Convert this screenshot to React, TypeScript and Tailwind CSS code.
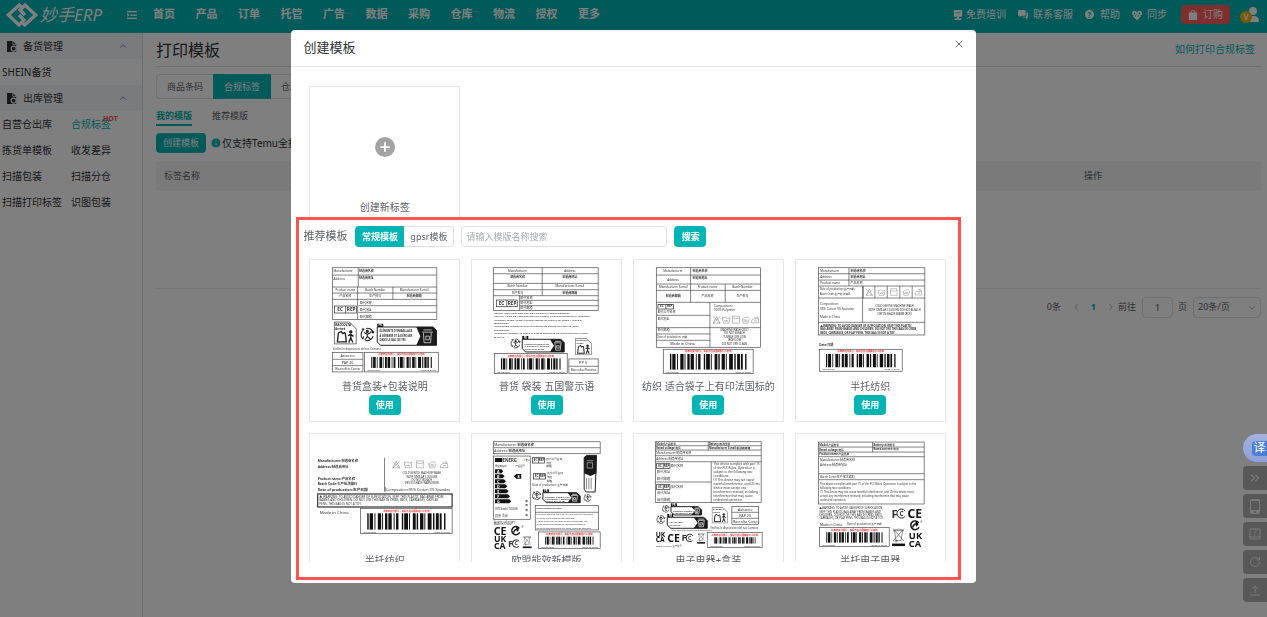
import React, { ReactNode } from 'react'
import { ChevronDown, ChevronLeft, ChevronRight, ChevronUp, ChevronsRight, Info, Plus, RotateCw, X } from 'lucide-react'

interface TextProps {
  x: number;
  y: number;
  s?: number;
  bold?: boolean;
  mid?: boolean;
  fill?: string;
  children: ReactNode;
}

interface BoxProps {
  x: number;
  y: number;
  w: number;
  h: number;
}

interface Template {
  name: string;
  art: ReactNode;
}

const navItems = ['首页', '产品', '订单', '托管', '广告', '数据', '采购', '仓库', '物流', '授权', '更多']

const outboundItems = ['自营仓出库', '合规标签', '拣货单模板', '收发差异', '扫描包装', '扫描分仓', '扫描打印标签', '识图包装']

const barWidths = [3, 2, 7, 3, 2, 5, 7, 2, 2, 4, 5, 2, 7, 4, 2, 3, 5, 7, 3, 2, 8, 2, 2, 6, 6, 2, 3, 4, 7, 2, 2, 5, 8, 3, 3, 3, 6, 2, 4, 5, 3]

/* ---------- small pieces used by the label previews ---------- */

const T = ({ x, y, s = 9, bold, mid, fill = '#333', children }: TextProps) => (
  <text x={x} y={y} fontSize={s} fontWeight={bold ? 700 : 400} textAnchor={mid ? 'middle' : 'start'} fill={fill}>
    {children}
  </text>
)

const Box = ({ x, y, w, h }: BoxProps) => (
  <rect x={x} y={y} width={w} height={h} fill="none" stroke="#444" strokeWidth={2} />
)

const Lines = ({ d }: { d: string }) => <path d={d} fill="none" stroke="#444" strokeWidth={2} />

const Barcode = ({ x, y, w, h }: BoxProps) => {
  const total = barWidths.reduce((a, b) => a + b, 0)
  const inner = w - 40
  let pos = x + 20
  return (
    <g>
      <Box x={x} y={y} w={w} h={h} />
      <T x={x + w / 2} y={y + 9} s={7} mid bold fill="#f83030">此条码仅为展示，实际会自动替换客户上传的</T>
      {barWidths.map((bar, index) => {
        const width = (bar / total) * inner
        const left = pos
        pos += width
        return index % 2 === 0 ? (
          <rect key={index} x={left} y={y + 14} width={width} height={h - 26} fill="#111" />
        ) : null
      })}
      <T x={x + 6} y={y + h - 3} s={7}>1234567890</T>
      <T x={x + w - 54} y={y + h - 3} s={7}>Made in China</T>
    </g>
  )
}

const EcRep = ({ x, y, w, h }: BoxProps) => (
  <g>
    <rect x={x} y={y} width={w} height={h} fill="none" stroke="#222" strokeWidth={2} />
    <path d={`M${x + w / 2} ${y}v${h}`} stroke="#222" strokeWidth={2} />
    <T x={x + w / 4} y={y + h - 5} s={h > 18 ? 14 : 9} bold mid>EC</T>
    <T x={x + (w * 3) / 4} y={y + h - 5} s={h > 18 ? 14 : 9} bold mid>REP</T>
  </g>
)

const Triman = ({ x, y, size }: { x: number; y: number; size: number }) => (
  <svg x={x} y={y} width={size} height={size} viewBox="0 0 40 40" fill="none" stroke="#222" strokeWidth={3}>
    <path d="M13 5C3 11 1 24 9 32M13 5l-7 0M9 32l2-7" />
    <path d="M18 3c10-2 18 4 19 13M37 16l-7-5M37 16l3-6" />
    <path d="M37 24c-3 9-12 14-21 12" />
    <circle cx="21" cy="11" r="3" fill="#222" />
    <path d="M12 14l9 5 10-5M21 18v8l-7 8M21 25l9 7" />
  </svg>
)

const SortBanner = ({ x, y, w, h, lines }: BoxProps & { lines: string[] }) => (
  <g>
    <rect x={x} y={y - 10} width={18} height={10} fill="#111" />
    <T x={x + 9} y={y - 2} s={8} bold mid fill="#fff">FR</T>
    <path d={`M${x} ${y}h${w - 10}l10 10v${h - 10}h${10 - w}l-10-10z`} fill="#fff" stroke="#222" strokeWidth={3} />
    <path d={`M${x + w * 0.66} ${y}h${w * 0.34 - 10}l10 10v${h - 10}h${-w * 0.34}l12-${h / 2}z`} fill="#1a1a1a" />
    {lines.map((line, index) => (
      <T key={line} x={x + 7} y={y + 16 + (index * (h - 14)) / lines.length} s={h > 40 ? 8 : 6} bold>{line}</T>
    ))}
    <g fill="none" stroke="#fff" strokeWidth={2}>
      <path d={`M${x + w * 0.78} ${y + h * 0.16}h${w * 0.14}M${x + w * 0.76} ${y + h * 0.28}h${w * 0.18}`} />
      <path d={`M${x + w * 0.78} ${y + h * 0.32}l2 ${h * 0.54}h${w * 0.11}l2-${h * 0.54}M${x + w * 0.82} ${y + h * 0.5}h${w * 0.06}v${h * 0.2}h${-w * 0.06}z`} />
    </g>
  </g>
)

const frLines = ["ÉLÉMENTS D'EMBALLAGE", 'À SÉPARER ET À DÉPOSER', 'DANS LE BAC DE TRI']

const Raccolta = ({ x, y, size }: { x: number; y: number; size: number }) => (
  <svg x={x} y={y} width={size} height={size} viewBox="0 0 68 68" fill="none" stroke="#222" strokeWidth={2}>
    <path d="M2 2h44l20 20v44H2z" />
    <text x="5" y="13" fontSize="9" fontWeight="700" fill="#222" stroke="none">RACCOLTA</text>
    <text x="5" y="24" fontSize="8" fontWeight="700" fill="#222" stroke="none">Arriveé</text>
    <path d="M14 34l-3 26h26l-3-26M14 34l8-4 5 6 7-4" strokeWidth="4" />
    <circle cx="50" cy="31" r="4" fill="#222" />
    <path d="M50 37v11l-6 14M50 48l6 14M42 42l8-4 8 6" strokeWidth="4" />
  </svg>
)

const Weee = ({ x, y, size }: { x: number; y: number; size: number }) => (
  <svg x={x} y={y} width={size * 0.7} height={size} viewBox="0 0 28 40" fill="none" stroke="#222" strokeWidth={1}>
    <path d="M6 9l3 19h10l3-19M4 8c6-4 14-4 20 0zM3 4l22 25M25 4L3 29" />
    <circle cx="9" cy="29" r="2" />
    <rect x="1" y="34" width="26" height="5" fill="#111" stroke="none" />
  </svg>
)

const GreenDot = ({ x, y, size }: { x: number; y: number; size: number }) => (
  <svg x={x} y={y} width={size} height={size} viewBox="0 0 40 40" fill="none" stroke="#111" strokeWidth={5}>
    <path d="M33 11A15 15 0 1 0 34 26" />
    <path d="M12 27c2-10 9-14 18-13M30 14l-8-6M30 14l-6 8" />
  </svg>
)

/* tub, triangle, square, iron ... one after another */
const CareIcons = ({ x, y, size, gap }: { x: number; y: number; size: number; gap: number }) => (
  <g fill="none" stroke="#555" strokeWidth={1}>
    {[
      'M2 20L11 3l9 17zM2 3l18 18M20 3L2 21',
      'M1 5l3 15h14l3-15M1 5c4 4 6-2 10 1s6 2 10-1M6 12l3 4 2-4 2 4 3-4',
      'M2 2h18v18H2zM2 6c6 4 12 4 18 0',
      'M2 8l3 12h12l4-12M3 12c4-7 9-8 17-7M7 12h9M6 15h10',
      'M1 19h20l-2-10H8c-4 0-6 4-7 10zM9 5h9v4M8 14h8',
    ].map((d, index) => (
      <svg key={index} x={x + index * gap} y={y} width={size} height={size} viewBox="0 0 22 22">
        <path d={d} />
      </svg>
    ))}
  </g>
)

const CeMark = ({ x, y, s }: { x: number; y: number; s: number }) => <T x={x} y={y} s={s} bold fill="#111">CE</T>

const Ukca = ({ x, y, s }: { x: number; y: number; s: number }) => (
  <g>
    <T x={x} y={y} s={s} bold fill="#111">UK</T>
    <T x={x} y={y + s * 0.8} s={s} bold fill="#111">CA</T>
  </g>
)

const Fcc = ({ x, y, s }: { x: number; y: number; s: number }) => (
  <g>
    <T x={x} y={y} s={s} bold>F</T>
    <circle cx={x + s * 0.88} cy={y - s * 0.36} r={s * 0.4} fill="none" stroke="#222" strokeWidth={3} pathLength={100} strokeDasharray="76 24" strokeDashoffset="-12" />
    <T x={x + s * 0.7} y={y - s * 0.16} s={s * 0.55} bold>C</T>
  </g>
)

/* ---------- label previews ---------- */

const BoxLabel = () => (
  <>
    <Box x={83} y={37} w={313} h={155} />
    <Lines d="M83 59h313M83 95h313M83 113h313M83 132h313M160 37v58M158 95v97M264 95v37M160 151h236M160 171h236" />
    <T x={86} y={51}>Manufacturer</T>
    <T x={162} y={51} bold>制造商名称</T>
    <T x={86} y={73}>Address</T>
    <T x={162} y={71} bold>制造商地址</T>
    <T x={121} y={107} mid>Product name</T>
    <T x={211} y={107} mid>Batch Number</T>
    <T x={328} y={107} mid>Manufacturer E-mail</T>
    <T x={121} y={126} mid>产品名称</T>
    <T x={211} y={126} mid>生产批号</T>
    <T x={328} y={126} mid bold>制造商邮箱</T>
    <EcRep x={89} y={152} w={66} h={21} />
    <T x={165} y={147}>欧代名称</T>
    <T x={165} y={167}>欧代地址</T>
    <T x={165} y={187}>欧代邮箱</T>
    <Raccolta x={86} y={198} size={70} />
    <Triman x={164} y={216} size={44} />
    <SortBanner x={217} y={215} w={178} h={55} lines={frLines} />
    <T x={83} y={284} s={8}>Verifica le disposizioni del tuo Comune</T>
    <Box x={83} y={292} w={91} h={58} />
    <Lines d="M83 312h91M83 331h91" />
    <T x={128} y={306} s={11} mid>Astuccio</T>
    <T x={128} y={325} s={11} mid>PAP 20</T>
    <T x={128} y={344} s={11} mid>Raccolta Carta</T>
    <Barcode x={179} y={291} w={222} h={59} />
  </>
)

const BagLabel = () => (
  <>
    <Box x={79} y={37} w={315} h={128} />
    <Lines d="M79 55h315M79 84h315M79 103h315M79 121h315M226 37v84M158 121v44M158 135h236M158 151h236" />
    <T x={152} y={49} mid>Manufacturer</T>
    <T x={309} y={49} mid>Address</T>
    <T x={152} y={68} mid bold>制造商名称</T>
    <T x={309} y={68} mid bold>制造商地址</T>
    <T x={152} y={96} mid>Batch Number</T>
    <T x={309} y={96} mid>Manufacturer E-mail</T>
    <T x={152} y={115} mid>生产批号</T>
    <T x={309} y={115} mid bold>制造商邮箱</T>
    <EcRep x={88} y={134} w={63} h={20} />
    <T x={161} y={131}>欧代名称</T>
    <T x={161} y={147}>欧代地址</T>
    <T x={161} y={162}>欧代邮箱</T>
    <T x={80} y={175} s={7} fill="#111">Warning: Keep plastic bags away from children to prevent suffocation.</T>
    <T x={80} y={186} s={7} fill="#111">Warnung: Halten Sie Plastiktüten fern von Kindern, um Erstickungsgefahr zu vermeiden.</T>
    <T x={80} y={196} s={7} fill="#111">Avvertenza: Tenere i sacchi di plastica lontano dai bambini per evitare il rischio di</T>
    <T x={80} y={206} s={7} fill="#111">soffocamento.</T>
    <T x={80} y={216} s={7} fill="#111">Avertissement: Éloignez les sacs en plastique des enfants pour éviter le risque</T>
    <T x={80} y={226} s={7} fill="#111">d'étouffement.</T>
    <T x={80} y={236} s={7} fill="#111">Advertencia: Mantener las bolsas de plástico alejadas de los niños para evitar el riesgo</T>
    <T x={80} y={247} s={7} fill="#111">de asfixia.</T>
    <Triman x={129} y={249} size={32} />
    <SortBanner x={166} y={252} w={126} h={38} lines={frLines} />
    <Raccolta x={324} y={248} size={52} />
    <Barcode x={82} y={295} w={219} h={60} />
    <Box x={306} y={311} w={88} h={43} />
    <Lines d="M306 333h88" />
    <T x={349} y={327} s={12} mid>PP 5</T>
    <T x={350} y={347} s={10} mid>Raccolta Plastica</T>
  </>
)

const TextileFrLabel = () => (
  <>
    <Box x={82} y={37} w={313} h={239} />
    <Lines d="M82 59h313M82 86h313M82 105h313M82 141h313M185 37v104M289 86v55M243 141v135M82 180h161M82 217h313M82 236h161M82 255h161" />
    <T x={132} y={51} mid>Manufacturer</T>
    <T x={191} y={51} bold>制造商名称</T>
    <T x={132} y={76} mid>Address</T>
    <T x={191} y={71} bold>制造商地址</T>
    <T x={133} y={99} mid>Manufacturer E-mail</T>
    <T x={236} y={99} mid>Product name</T>
    <T x={341} y={99} mid>Batch Number</T>
    <T x={133} y={126} mid bold>制造商邮箱</T>
    <T x={236} y={126} mid>产品名称</T>
    <T x={341} y={126} mid>生产批号</T>
    <EcRep x={87} y={147} w={47} h={14} />
    <T x={86} y={173}>欧代公司名称</T>
    <T x={86} y={193}>欧代地址</T>
    <T x={86} y={228}>欧代邮箱</T>
    <T x={84} y={248} s={8}>Date of production: 日期</T>
    <T x={161} y={269} s={11} mid>Made in China</T>
    <T x={255} y={154}>Composition:</T>
    <T x={255} y={166}>100% Polyester</T>
    <CareIcons x={250} y={180} size={26} gap={29} />
    <T x={317} y={226} s={8} mid>MACHINE WASH COLD</T>
    <T x={317} y={236} s={8} mid>DO NOT BLEACH</T>
    <T x={317} y={247} s={8} mid>TUMBLE DRY LOW</T>
    <T x={317} y={258} s={8} mid>IRON LOW</T>
    <T x={317} y={270} s={8} mid>DO NOT DRY CLEAN</T>
    <Barcode x={103} y={282} w={270} h={73} />
  </>
)

const SemiTextileLabel = () => (
  <>
    <Box x={83} y={37} w={319} h={202} />
    <Lines d="M83 55h319M83 74h319M83 92h319M83 128h319M83 201h319M174 37v55M215 92v109M217 92v36M252 92v36M289 92v36M327 92v36M364 92v36" />
    <T x={88} y={49}>Manufacturer</T>
    <T x={179} y={49} bold>制造商名称</T>
    <T x={88} y={68}>Address</T>
    <T x={179} y={68} bold>制造商地址</T>
    <T x={88} y={87}>Product name</T>
    <T x={179} y={87}>产品名称</T>
    <T x={86} y={103} s={8}>Date of production:生产日期</T>
    <T x={86} y={119} s={8}>Batch Code:生产批次编码</T>
    <CareIcons x={223} y={98} size={24} gap={37} />
    <T x={87} y={149}>Composition:</T>
    <T x={87} y={163}>95% Cotton 5% Spandex</T>
    <T x={87} y={187}>Made in China</T>
    <T x={311} y={154} s={8} mid>COLD GENTLE MACHINE WASH</T>
    <T x={311} y={166} s={8} mid>WITH SIMILAR COLOURS DO NOT BLEACH</T>
    <T x={311} y={178} s={8} mid>DRY IN SHADE WARM IRON</T>
    <T x={88} y={214} s={8} bold>▲WARNING: TO AVOID DANGER OF SUFFOCATION, KEEP THIS PLASTIC</T>
    <T x={88} y={225} s={8} bold>BAG AWAY FROM BABIES AND CHILDREN. DO NOT USE THIS BAG IN CRIBS,</T>
    <T x={88} y={235} s={8} bold>BEDS, CARRIAGES, OR PLAY PENS. THIS BAG IS NOT A TOY.</T>
    <T x={85} y={273} s={9} bold>Date:日期</T>
    <Barcode x={85} y={282} w={249} h={66} />
  </>
)

const SemiTextileWideLabel = () => (
  <>
    <T x={38} y={98} s={10} bold>Manufacturer:制造商名称</T>
    <T x={38} y={115} s={10} bold>Address:制造商地址</T>
    <T x={38} y={151} s={10} bold>Product name:产品名称</T>
    <T x={38} y={167} s={10} bold>Batch Code:生产批次编码</T>
    <T x={38} y={184} s={11} bold>Date of production:生产日期</T>
    <Lines d="M239 85v102M241 173v14" />
    <CareIcons x={261} y={92} size={26} gap={36} />
    <T x={351} y={134} s={8} mid>COLD GENTLE MACHINE WASH</T>
    <T x={351} y={145} s={8} mid>WITH SIMILAR COLOURS</T>
    <T x={351} y={155} s={8} mid>DO NOT BLEACH</T>
    <T x={351} y={165} s={8} mid>DRY IN SHADE WARM IRON</T>
    <T x={243} y={184} s={11}>Composition:95% Cotton 5% Spandex</T>
    <rect x={38} y={194} width={404} height={39} fill="none" stroke="#444" strokeWidth={4} />
    <T x={43} y={205} s={9}>▲ WARNING: TO AVOID DANGER OF SUFFOCATION, KEEP THIS PLASTIC BAG AWAY FROM</T>
    <T x={43} y={216} s={9}>BABIES AND CHILDREN. DO NOT USE THIS BAG IN CRIBS, BEDS, CARRIAGES, OR PLAY</T>
    <T x={43} y={227} s={9}>PENS. THIS BAG IS NOT A TOY.</T>
    <T x={44} y={253} s={13}>Made in China</T>
    <Barcode x={167} y={238} w={275} h={75} />
  </>
)

const EnergyLabel = () => (
  <>
    <Box x={79} y={37} w={321} h={36} />
    <Lines d="M79 55h321" />
    <T x={82} y={49} s={10}>Manufacturer: <tspan fontWeight={700}>制造商名称</tspan></T>
    <T x={82} y={68} s={10}>Address: <tspan fontWeight={700}>制造商地址</tspan></T>
    <Box x={79} y={80} w={111} h={190} />
    <rect x={84} y={86} width={22} height={12} fill="#111" />
    <T x={107} y={97} s={13} bold>ENERG</T>
    <T x={162} y={96} s={6}>⚡ 二维码</T>
    <T x={84} y={113} s={7}>供应商名称</T>
    <T x={146} y={113} s={7}>产品型号</T>
    {['A', 'B', 'C', 'D', 'E', 'F', 'G'].map((grade, index) => (
      <g key={grade}>
        <path d={`M84 ${120 + index * 15}h${19 + index * 4}l6 6-6 6h-${19 + index * 4}z`} fill="#111" />
        <T x={94} y={130 + index * 15} s={11} bold mid fill="#fff">{grade}</T>
      </g>
    ))}
    <path d="M141 141l7-7h15v14h-15z" fill="#111" />
    <T x={155} y={145} s={10} bold mid fill="#fff">B</T>
    <T x={84} y={243} s={10}>XYZkwh/1000h</T>
    <T x={84} y={262} s={9}>其他 法规</T>
    {[217, 231, 246, 260].map((y) => <T key={y} x={175} y={y} s={8}>高</T>)}
    <T x={80} y={280} s={8}>Country of origin:</T>
    <T x={80} y={288} s={8}>Made in China</T>
    <EcRep x={197} y={85} w={36} h={16} />
    <T x={238} y={92} s={8}>欧代公司名称</T>
    <T x={238} y={103} s={8}>地址</T>
    <T x={238} y={114} s={8}>邮箱</T>
    <EcRep x={200} y={133} w={36} h={16} />
    <T x={240} y={134} s={8}>英代公司名称</T>
    <T x={240} y={145} s={8}>地址</T>
    <T x={240} y={157} s={8}>邮箱</T>
    <T x={196} y={170} s={8}>Date of production: 生产日期</T>
    <path d="M352 84l8-6h29l-4 110h-27l-6-8z" fill="#fff" stroke="#222" strokeWidth={3} />
    <path d="M352 84l8-6h29v54l-18 8-19-8z" fill="#1a1a1a" />
    <path d="M359 94h20M361 100h16v16h-16zM359 146v34M366 146v34M373 146v34" fill="none" stroke="#888" strokeWidth={3} />
    <Triman x={349} y={194} size={25} />
    <Triman x={194} y={185} size={29} />
    <SortBanner x={228} y={190} w={112} h={30} lines={frLines} />
    <Box x={205} y={229} w={190} h={73} />
    <Lines d="M205 249h190" />
    <T x={208} y={239} s={7} bold>Input voltage/current</T>
    <T x={208} y={258} s={6}>This device complies with part 15 of the FCC Rules. Operation</T>
    <T x={208} y={268} s={6}>is subject to the following two conditions:</T>
    <T x={208} y={278} s={6}>(1) This device may not cause harmful interference, and</T>
    <T x={208} y={288} s={6}>(2) this device must accept any interference received,</T>
    <T x={208} y={298} s={6}>including interference that may cause undesired operation.</T>
    <CeMark x={80} y={317} s={32} />
    <GreenDot x={130} y={288} size={33} />
    <T x={163} y={297} s={8}>®</T>
    <Ukca x={81} y={337} s={26} />
    <Fcc x={123} y={353} s={28} />
    <Weee x={166} y={316} size={42} />
    <Barcode x={215} y={308} w={185} h={50} />
  </>
)

const ElectronicBoxLabel = () => (
  <>
    <Box x={79} y={37} w={318} h={183} />
    <Lines d="M79 49h318M79 62h318M79 79h318M79 97h318M238 37v25M247 97v123M79 158h168" />
    <T x={82} y={47} s={8} bold>Model:产品型号</T>
    <T x={240} y={47} s={8} bold>Battery:电池型号</T>
    <T x={82} y={59} s={8} bold>Rated voltage:电压</T>
    <T x={240} y={59} s={8} bold>Manufacturer E-mail:制造商邮箱</T>
    <T x={82} y={75} s={9}>Manufacturer:制造商名称</T>
    <T x={82} y={91} s={9}>Address:制造商地址</T>
    <EcRep x={83} y={103} w={40} h={14} />
    <T x={126} y={114} s={9}>欧代名称</T>
    <T x={84} y={132} s={10}>欧代地址</T>
    <T x={84} y={151} s={10}>欧代邮箱</T>
    <EcRep x={83} y={166} w={40} h={14} />
    <T x={126} y={176} s={9}>英代名称</T>
    <T x={84} y={195} s={10}>英代地址</T>
    <T x={84} y={214} s={10}>英代邮箱</T>
    {[
      'This device complies with part 15',
      'of the FCC Rules. Operation is',
      'subject to the following two',
      'conditions:',
      '(1) This device may not cause',
      'harmful interference, and (2) this',
      'device must accept any',
      'interference received, including',
      'interference that may cause',
      'undesired operation.',
    ].map((line, index) => <T key={line} x={254} y={107 + index * 12} s={9}>{line}</T>)}
    <Triman x={98} y={227} size={24} />
    <SortBanner x={126} y={232} w={92} h={25} lines={frLines.slice(0, 2)} />
    <Triman x={81} y={257} size={28} />
    <SortBanner x={115} y={264} w={120} h={33} lines={['CET APPAREIL', 'SE RECYCLE']} />
    <T x={128} y={305} s={5}>Points de collecte sur www.quefairedemesdechets.fr</T>
    <Raccolta x={248} y={233} size={50} />
    <Box x={309} y={232} w={80} h={53} />
    <Lines d="M309 249h80M309 267h80" />
    <T x={349} y={244} s={11} mid>Astuccio</T>
    <T x={349} y={262} s={11} mid>PAP 20</T>
    <T x={349} y={280} s={11} mid>Raccolta Carta</T>
    <T x={244} y={299} s={8}>Verifica le disposizioni del tuo Comune</T>
    <Ukca x={80} y={323} s={20} />
    <CeMark x={115} y={337} s={32} />
    <Fcc x={158} y={336} s={28} />
    <Weee x={204} y={308} size={36} />
    <T x={81} y={352} s={7}>Batch Number:生产批号</T>
    <Barcode x={235} y={310} w={165} h={45} />
  </>
)

const SemiElectronicLabel = () => (
  <>
    <Box x={83} y={38} w={317} h={186} />
    <Lines d="M83 53h317M83 68h317M83 82h317M83 133h317M83 151h317M245 38v30" />
    <T x={85} y={50} s={8} bold>Model:产品型号</T>
    <T x={248} y={49} s={8} bold>Battery:电池型号</T>
    <T x={85} y={64} s={8} bold>Rated voltage:电压</T>
    <T x={248} y={63} s={8} bold>Rated current: 电流</T>
    <T x={85} y={77} s={8} bold>Product name:产品名称</T>
    <T x={87} y={95} s={9}>Manufacturer:制造商名称</T>
    <T x={87} y={109} s={9}>Address:制造商地址</T>
    <T x={87} y={145} s={9}>Batch Code:生产批次编码</T>
    {[
      'This device complies with part 15 of the FCC Rules. Operation is subject to the',
      'following two conditions:',
      '(1) This device may not cause harmful interference, and (2) this device must',
      'accept any interference received, including interference that may cause',
      'undesired operation.',
    ].map((line, index) => <T key={line} x={87} y={167 + index * 12} s={8}>{line}</T>)}
    <T x={85} y={240} s={8}>▲WARNING: TO AVOID DANGER OF SUFFOCATION,</T>
    <T x={85} y={250} s={8}>KEEP THIS PLASTIC BAG AWAY FROM BABIES AND</T>
    <T x={85} y={260} s={8}>CHILDREN. DO NOT USE THIS BAG IN CRIBS, BEDS,</T>
    <T x={85} y={270} s={8}>CARRIAGES, OR PLAY PENS. THIS BAG IS NOT A TOY.</T>
    <T x={87} y={289} s={10}>Made in China</T>
    <T x={168} y={288} s={8}>Date of production:生产日期</T>
    <Barcode x={86} y={295} w={209} h={57} />
    <Fcc x={302} y={265} s={34} />
    <CeMark x={350} y={265} s={36} />
    <GreenDot x={355} y={271} size={35} />
    <T x={388} y={280} s={8}>®</T>
    <Weee x={302} y={292} size={60} />
    <Ukca x={354} y={330} s={28} />
  </>
)

const templates: Template[] = [
  { name: '普货盒装+包装说明', art: <BoxLabel /> },
  { name: '普货 袋装 五国警示语', art: <BagLabel /> },
  { name: '纺织 适合袋子上有印法国标的', art: <TextileFrLabel /> },
  { name: '半托纺织', art: <SemiTextileLabel /> },
  { name: '半托纺织', art: <SemiTextileWideLabel /> },
  { name: '欧盟能效新模版', art: <EnergyLabel /> },
  { name: '电子电器+盒装', art: <ElectronicBoxLabel /> },
  { name: '半托电子电器', art: <SemiElectronicLabel /> },
]

/* ---------- page ---------- */

const Header = () => (
  <header className="flex h-[33px] items-center bg-[#00b4b3] pr-[7px] pb-1 pl-1.5 text-white">
    <svg viewBox="0 0 96 72" className="h-6 w-8 shrink-0" fill="none" stroke="currentColor" strokeWidth="10">
      <path d="M48 14L40 6 7 36l32 30 15-15-15-15" />
      <path d="M48 58l8 8 33-30L57 6 42 21l15 15" />
    </svg>
    <span className="ml-0.5 w-[87px] text-[17px] leading-6 italic">妙手ERP</span>
    <button type="button" aria-label="菜单" className="mr-4">
      <svg viewBox="0 0 12 12" className="h-2.5 w-2.5" fill="none" stroke="currentColor" strokeWidth="1.5">
        <path d="M0 2h12M4 6h8M0 10h12M0 4.500l2 1.500-2 1.500" />
      </svg>
    </button>
    <nav className="flex w-[447px] justify-between text-[11px] font-bold">
      {navItems.map((item) => <a key={item} href="#">{item}</a>)}
    </nav>
    <div className="ml-auto flex items-center text-[10px]">
      <a href="#" className="mr-3 flex items-center gap-[3px]">
        <svg viewBox="0 0 12 12" className="h-2.5 w-2.5" fill="currentColor">
          <path d="M1 0h10v8H7v2h3v2H2v-2h3V8H1zM3 3v1h6V3z" fillRule="evenodd" />
        </svg>
        免费培训
      </a>
      <a href="#" className="mr-3 flex items-center gap-[5px]">
        <svg viewBox="0 0 12 12" className="h-2.5 w-2.5" fill="currentColor">
          <path d="M1 0h8v7H4L2 9V7H0V1zM10 3h2v6h-1v3L9 9H5V8h5z" />
        </svg>
        联系客服
      </a>
      <a href="#" className="mr-3 flex items-center gap-1.5">
        <span className="flex h-[9px] w-[9px] items-center justify-center rounded-full bg-white text-[8px] font-bold text-[#00b4b3]">?</span>
        帮助
      </a>
      <a href="#" className="mr-3.5 flex items-center gap-[5px]">
        <svg viewBox="0 0 12 12" className="h-2.5 w-2.5" fill="none" stroke="currentColor" strokeWidth="2">
          <circle cx="3" cy="4" r="2" />
          <circle cx="9" cy="4" r="2" />
          <path d="M2 7l4 4 4-4M6 6v3" />
        </svg>
        同步
      </a>
      <button type="button" className="flex h-[19px] items-center gap-[5px] rounded-sm bg-[#ff5c5c] px-[7px]">
        <svg viewBox="0 0 12 12" className="h-2.5 w-2.5" fill="currentColor">
          <path d="M3 3a3 3 0 0 1 6 0h2v9H1V3zm1 0h4a2 2 0 0 0-4 0z" fillRule="evenodd" />
        </svg>
        订购
      </button>
      <button type="button" aria-label="账号" className="ml-2.5">
        <svg viewBox="0 0 20 16" className="h-4 w-5">
          <circle cx="13" cy="4" r="4" fill="#fff" />
          <path d="M7 15c0-5 2-6 6-6s6 1 6 6z" fill="#fff" />
          <circle cx="6" cy="10" r="6" fill="#f0b400" />
          <text x="6" y="13" fontSize="8" fontWeight="700" textAnchor="middle" fill="#fff">V</text>
        </svg>
      </button>
    </div>
  </header>
)

const GroupTitle = ({ title }: { title: string }) => (
  <button type="button" className="flex h-[26px] w-full items-center bg-[#f5f7fa] pr-3.5 pl-[7px] text-left">
    <svg viewBox="0 0 12 13" className="mr-1.5 h-[11px] w-2.5">
      <path d="M0 0h7l4 4v9H0z" fill="#303133" />
      <path d="M7 0v4h4" fill="none" stroke="#f5f7fa" />
      <circle cx="8" cy="9" r="3" fill="#303133" stroke="#f5f7fa" strokeWidth="1.500" />
    </svg>
    {title}
    <ChevronUp className="ml-auto h-2.5 w-2.5 text-gray-500" />
  </button>
)

const Sidebar = () => (
  <aside className="w-[143px] shrink-0 border-r border-[#dcdfe6] text-[10px] text-[#303133]">
    <GroupTitle title="备货管理" />
    <a href="#" className="flex h-[26px] items-center pl-0.5">SHEIN备货</a>
    <GroupTitle title="出库管理" />
    <div className="grid grid-cols-2 pr-0.5 pl-0.5">
      {outboundItems.map((item) => (
        <a key={item} href="#" className={`flex h-[26px] items-center whitespace-nowrap ${item === '合规标签' ? 'text-[#00b4b3]' : ''}`}>
          <span className="relative">
            {item}
            {item === '合规标签' && <sup className="absolute top-0.5 left-8 text-[7px] font-bold text-[#ff4d4f]">HOT</sup>}
          </span>
        </a>
      ))}
    </div>
  </aside>
)

const Pagination = () => (
  <div className="mt-2 flex items-center justify-end text-[9px] text-[#606266]">
    <span className="mr-2.5">0条</span>
    <button type="button" aria-label="上一页"><ChevronLeft className="h-2.5 w-2.5 text-gray-400" /></button>
    <span className="mx-2.5 font-bold text-[#00b4b3]">1</span>
    <button type="button" aria-label="下一页"><ChevronRight className="h-2.5 w-2.5 text-gray-400" /></button>
    <label htmlFor="page" className="ml-0.5">前往</label>
    <input id="page" defaultValue="1" className="mr-[5px] ml-1.5 h-[21px] w-[31px] rounded-sm border border-[#dcdfe6] text-center" />
    <span>页</span>
    <div className="relative ml-1.5">
      <select aria-label="每页条数" className="h-[21px] w-[68px] appearance-none rounded-sm border border-[#dcdfe6] pl-1">
        <option>20条/页</option>
      </select>
      <ChevronDown className="pointer-events-none absolute top-1.5 right-1 h-2.5 w-2.5 text-gray-400" />
    </div>
  </div>
)

const MainContent = () => (
  <main className="min-w-0 flex-1 pr-1.5 pl-[13px] text-[9px] text-[#606266]">
    <div className="flex h-[34px] items-center justify-between border-b border-[#dcdfe6]">
      <h1 className="text-[16px] text-[#303133]">打印模板</h1>
      <a href="#" className="mr-1.5 text-[10px] text-[#00b4b3]">如何打印合规标签</a>
    </div>
    <div className="mt-[7px] inline-flex h-[25px] rounded-sm border border-[#dcdfe6]">
      <button type="button" className="w-14">商品条码</button>
      <button type="button" className="-my-px w-[58px] bg-[#00b4b3] text-white">合规标签</button>
      <button type="button" className="w-14">仓库条码</button>
    </div>
    <div className="mt-2 flex h-[19px] items-stretch gap-5">
      <button type="button" className="border-b-2 border-[#00b4b3] font-bold text-[#00b4b3]">我的模版</button>
      <button type="button" className="border-b-2 border-transparent">推荐模版</button>
    </div>
    <div className="mt-[7px] flex items-center">
      <button type="button" className="h-5 rounded-sm bg-[#00b4b3] px-[7px] text-white">创建模板</button>
      <Info className="ml-1 h-3 w-3 fill-[#00b4b3] text-white" />
      <span className="text-[10px] text-[#303133]">仅支持Temu全托管、半托管店铺使用</span>
    </div>
    <table className="mt-2 w-full table-fixed text-left">
      <thead>
        <tr className="h-[30px] bg-[#f5f5f5]">
          <th className="pl-2 font-normal">标签名称</th>
          <th className="w-[185px] pl-2 font-normal">操作</th>
        </tr>
      </thead>
      <tbody>
        <tr className="h-[97px] border-b border-[#ebeef5]">
          <td colSpan={2}></td>
        </tr>
      </tbody>
    </table>
    <Pagination />
  </main>
)

const toolClass = 'flex h-6 w-6 items-center justify-center rounded-l-sm bg-[#b0b0b0] text-[#f2f2f2]'

const FloatTools = () => (
  <div className="fixed right-0 bottom-[15px] flex flex-col gap-1">
    <button type="button" aria-label="收起" className={toolClass}><ChevronsRight className="h-3.5 w-3.5" /></button>
    <button type="button" aria-label="手机端" className={toolClass}>
      <svg viewBox="0 0 10 15" className="h-[15px] w-2.5">
        <rect width="10" height="15" rx="2" fill="currentColor" />
        <rect x="1" y="2" width="8" height="9" fill="#b0b0b0" />
        <circle cx="5" cy="13" r="1" fill="#b0b0b0" />
      </svg>
    </button>
    <button type="button" aria-label="帮助手册" className={toolClass}>
      <svg viewBox="0 0 12 12" className="h-3 w-3" fill="none" stroke="currentColor">
        <path d="M1 1h10v10H1zM1 9h10" />
        <text x="6" y="8" fontSize="8" textAnchor="middle" fill="currentColor" stroke="none">?</text>
      </svg>
    </button>
    <button type="button" aria-label="刷新" className={toolClass}><RotateCw className="h-3 w-3" /></button>
    <button type="button" aria-label="回到顶部" className={toolClass}>
      <svg viewBox="0 0 12 12" className="h-3 w-3" fill="none" stroke="currentColor">
        <path d="M6 9V2M3 5l3-3 3 3M1 11h10" />
      </svg>
    </button>
  </div>
)

const CreateModal = () => (
  <div className="fixed inset-0 flex justify-center bg-black/50 pt-[30px] pb-[34px]">
    <div role="dialog" aria-label="创建模板" className="relative flex w-[54%] flex-col rounded-sm bg-white pb-[21px] text-[#606266]">
      <div className="flex h-[37px] shrink-0 items-center justify-between border-b border-[#e8eaf0] pr-[11px] pl-3">
        <h2 className="text-[13px] text-[#303133]">创建模板</h2>
        <button type="button" aria-label="关闭" className="mb-2"><X className="h-3 w-3" /></button>
      </div>

      <div className="h-[150px] shrink-0 overflow-hidden pt-[19px] pr-[30px] pl-[18px]">
        <div className="grid grid-cols-4 gap-[11px]">
          <button type="button" className="flex h-[163px] flex-col items-center border border-[#e4e7ed] pt-[50px] text-[10px]">
            <span className="flex h-5 w-5 items-center justify-center rounded-full bg-[#a3a3a3] text-white">
              <Plus className="h-3.5 w-3.5" strokeWidth={3} />
            </span>
            <span className="mt-[43px]">创建新标签</span>
          </button>
        </div>
      </div>

      <div className="flex h-[42px] shrink-0 items-center pb-[3px] pl-3 text-[9px]">
        <span className="mr-2 text-[11px]">推荐模板</span>
        <button type="button" className="h-[21px] w-[49px] rounded-l-sm bg-[#00b4b3] font-bold text-white">常规模板</button>
        <button type="button" className="h-[21px] w-[50px] rounded-r-sm border border-l-0 border-[#dcdfe6]">gpsr模板</button>
        <input
          type="text"
          aria-label="模版名称"
          placeholder="请输入模版名称搜索"
          className="mx-[7px] h-[21px] w-[206px] rounded-sm border border-[#dcdfe6] px-1 placeholder:text-[#a8abb2]"
        />
        <button type="button" className="h-[21px] w-8 rounded-sm bg-[#00b4b3] font-bold text-white">搜索</button>
      </div>

      <div className="min-h-0 flex-1 overflow-hidden pr-[30px] pl-[18px]">
        <div className="grid grid-cols-4 gap-[11px]">
          {templates.map((template, index) => (
            <div key={index} className="flex h-[163px] flex-col items-center border border-[#e4e7ed]">
              <svg viewBox="15 14 447 345" className="h-[115px] w-full shrink-0" role="img" aria-label={template.name}>
                {template.art}
              </svg>
              <p className="h-5 text-[10px] leading-[22px] whitespace-nowrap">{template.name}</p>
              <button type="button" className="h-5 w-8 shrink-0 rounded-sm bg-[#00b4b3] text-[9px] font-bold text-white">使用</button>
            </div>
          ))}
        </div>
      </div>

      {/* highlighted area */}
      <div className="pointer-events-none absolute top-[187px] right-[15px] bottom-[3px] left-[5px] border-[3px] border-[#ff5252]"></div>
    </div>
  </div>
)

const App = () => {
  return (
    <div className="flex min-h-screen flex-col bg-white font-['Noto_Sans','Noto_Sans_CJK_SC',sans-serif]">
      <Header />
      <div className="flex flex-1">
        <Sidebar />
        <MainContent />
      </div>
      <FloatTools />
      <CreateModal />
      <button
        type="button"
        aria-label="翻译"
        className="fixed right-0 bottom-[155px] flex h-7 w-6 items-center justify-end rounded-l-full bg-linear-to-b from-[#a3b1dd] to-[#919fda]"
      >
        <span className="flex h-[15px] w-[15px] items-center justify-center rounded-l-sm bg-[#4a7fd6] text-[12px] leading-none text-white">译</span>
      </button>
    </div>
  )
}

export default App
